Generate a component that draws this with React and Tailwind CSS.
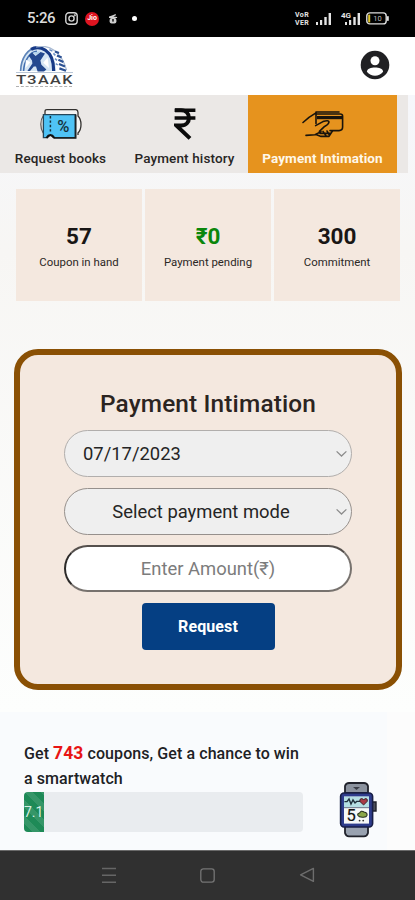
import React from 'react';

const stats = [
  { value: '57', label: 'Coupon in hand', color: 'text-[#191615]' },
  { value: '₹0', label: 'Payment pending', color: 'text-[#0b860b]' },
  { value: '300', label: 'Commitment', color: 'text-[#191615]' },
];

const Signal = () => (
  <svg width="17" height="14" viewBox="0 0 17 14" fill="#e4e4e4">
    <rect x="1" y="10" width="2" height="3" />
    <rect x="5" y="8" width="2.2" height="5" />
    <rect x="9.3" y="5" width="2.4" height="8" />
    <rect x="13.6" y="1" width="2.4" height="12" />
  </svg>
);

const StatusBar = () => (
  <div className="h-[37px] bg-black text-white flex items-center pl-[27px] pr-[26px]">
    <span className="text-[15px] leading-none font-medium text-[#dcdcdc] w-[38px] tracking-[-0.3px]">5:26</span>
    <svg width="13" height="13" viewBox="0 0 13 13" fill="none" stroke="#d6d6d6" strokeWidth="1.4">
      <rect x="0.8" y="0.8" width="11.4" height="11.4" rx="3.2" />
      <circle cx="6.5" cy="6.5" r="2.6" />
      <circle cx="9.8" cy="3.3" r="0.4" />
    </svg>
    <span className="ml-[7px] w-[14px] h-[14px] rounded-full bg-[#de1420] flex items-center justify-center text-[7px] leading-none font-bold">
      Jio
    </span>
    <svg className="ml-[9px]" width="10" height="12" viewBox="0 0 10 12" fill="#cfcfcf">
      <path d="M1 3.6 L4 2.6 L7.6 1 L8 2.2 L5.4 3.6 L9.2 4 L9 5 H1 Z" />
      <rect x="1.6" y="5" width="6.8" height="5.6" rx="2" />
      <rect x="4.2" y="6" width="1.6" height="2.6" fill="#222" />
    </svg>
    <span className="ml-[14px] w-[5px] h-[5px] rounded-full bg-white" />
    <div className="ml-auto flex items-center">
      <span className="flex flex-col text-[7px] leading-[8px] font-bold text-[#e4e4e4] w-[17px] tracking-[0.4px]">
        <span>VoR</span>
        <span>VER</span>
      </span>
      <span className="ml-[3px]"><Signal /></span>
      <span className="relative ml-[9px] w-[20px] h-[14px] flex justify-end">
        <Signal />
        <span className="absolute left-0 top-0 text-[8px] leading-[7px] font-bold text-[#e4e4e4]">4G</span>
      </span>
      <svg className="ml-[5px]" width="23" height="13" viewBox="0 0 23 13">
        <rect x="0.8" y="0.9" width="19.4" height="11" rx="3" fill="none" stroke="#dedede" strokeWidth="1.4" />
        <rect x="2.2" y="2.6" width="2" height="7.8" fill="#e0c62c" />
        <rect x="21" y="4" width="1.8" height="5" rx="0.8" fill="#dedede" />
        <text x="11.4" y="9.2" fontSize="7.5" fontFamily="Roboto, sans-serif" fill="#bdbdbd" textAnchor="middle">10</text>
      </svg>
    </div>
  </div>
);

const Logo = () => (
  <div className="w-[58px] flex flex-col items-center">
    <svg width="50" height="26" viewBox="0 0 50 26" fill="none">
      <path d="M2 25 C2 11 10 1 19 1 C30 1 37 11 37 25 Z" fill="#d6e6f4" />
      <path d="M1.6 25 C2 12 9 2 18 1.6" stroke="#5c83b8" strokeWidth="1.6" />
      <path d="M4.6 25 C5 15 11 5.4 18 5.2" stroke="#4470b0" strokeWidth="1.6" />
      <path d="M12 3.4 C20 -1 35 3 34.6 25" stroke="#173a87" strokeWidth="3.2" />
      <path d="M17 1 C30 -2 42 5 47.6 24" stroke="#a9bad2" strokeWidth="1.2" />
      <path d="M36 5.4 L40 7 M38 9.4 L42.6 11.6 M39.4 13.8 L44.4 16 M40 18 L46 20.4 M40.4 22.4 L47 24.8" stroke="#2d5294" strokeWidth="2.2" />
      <path d="M30.4 3.6 L33.4 5.2 M34.4 7.4 L36.4 9.4 M36 12.6 L38 14.4 M36.8 17.6 L38.8 19" stroke="#6d91c4" strokeWidth="1.5" />
      <path d="M9.6 9.4 L13 6.6 L16.6 10 L21.6 6 L26 7.4 L21.4 14.4 L22.4 18.8 L27.4 23.4 L25 25.6 H18.6 L17 20.6 L14.8 20.4 L11 25 H8.4 L13.4 17.6 L13 14.6 Z" fill="#24498f" />
      <path d="M6.8 13.8 L11.4 16.2 L6.4 22 Z M28.6 11.4 L24.2 16.8 L30 22 Z" fill="#fff" />
      <path d="M14 6.2 L17 9 L21.6 5.6 Z" fill="#b2d4ec" />
    </svg>
    <div className="h-[12px] w-[57px] border-t border-[#b9c6d6] flex justify-between items-center px-px text-[13.5px] leading-[12px] font-medium text-[#3f3f3f]">
      <span className="scale-x-[1.25]">T</span>
      <span className="scale-x-[1.25]">3</span>
      <span className="scale-x-[1.2]">A</span>
      <span className="scale-x-[1.2]">A</span>
      <span className="scale-x-[1.2]">K</span>
    </div>
    <span className="mt-[2px] w-[56px] border-t border-dashed border-[#b0b0b0]" />
  </div>
);

const Header = () => (
  <div className="h-[58px] bg-white flex justify-between pl-[15px] pr-[25px]">
    <div className="pt-[9px]"><Logo /></div>
    <svg className="mt-[13px]" width="30" height="30" viewBox="0 0 30 30">
      <circle cx="15" cy="15" r="14.3" fill="#202023" />
      <circle cx="15" cy="10.8" r="4.5" fill="#fff" />
      <path d="M6.9 21.8 C7 18.6 11 17.4 15 17.4 C19 17.4 23 18.6 23.1 21.8 C21 24.6 18 25.8 15 25.8 C12 25.8 9 24.6 6.9 21.8 Z" fill="#fff" />
    </svg>
  </div>
);

const CouponIcon = () => (
  <svg width="42" height="32" viewBox="0 0 42 32">
    <path d="M5 6 V3.4 Q5 1.6 7 1.6 H36 Q38 2 38 4.4 V8 C42 12 42 21 38 25 V27" fill="#f3f3f3" stroke="#33312f" strokeWidth="1.3" />
    <path d="M3.2 8 C0 12 0 20 3.2 25" fill="none" stroke="#5b5856" strokeWidth="1.2" />
    <path d="M3.4 6.6 H35.4 V29.6 H13.4 Q10.4 25 7.4 29.6 H3.4 Z" fill="#4fc3f6" stroke="#24465a" strokeWidth="1.3" />
    <path d="M35.6 6.6 V29.8 H14" fill="none" stroke="#1b2326" strokeWidth="1.8" />
    <path d="M6.4 30 Q10.4 24 14.4 30" fill="none" stroke="#111" strokeWidth="2.2" />
    <path d="M10.4 8 V24" stroke="#17303c" strokeWidth="1.5" strokeDasharray="2.4 2" />
    <text x="23.4" y="23.6" fontSize="16.5" fontWeight="500" fontFamily="Roboto, sans-serif" fill="#16303d" textAnchor="middle">%</text>
  </svg>
);

const RupeeIcon = () => (
  <svg width="22" height="32" viewBox="0 0 22 32" fill="none" stroke="#0b0b0b" strokeWidth="3.4">
    <path d="M0.6 2.2 H21.4 M0.6 10 H21.4" />
    <path d="M1 2.2 H7 C17.6 2.2 17.6 17.6 7 17.6 H2.6 L16 30.4" strokeWidth="4" />
  </svg>
);

const CardHandIcon = () => (
  <svg width="42" height="28" viewBox="0 0 42 28" fill="none" stroke="#19140c" strokeWidth="1.6" strokeLinecap="round" strokeLinejoin="round">
    <path d="M1 12.5 L7 7.4 L14 2.8 M14 2 H37" />
    <path d="M14 3 V13.4 M13.6 15.6 L21 11.6 Q26.6 9.6 27 12 Q26.6 14.6 22.6 16.4 L17.4 21.4" />
    <path d="M28 20.6 H37 Q40.6 20.6 40.6 17 V6 Q40.6 4 38 4 H14" />
    <path d="M15 7.6 H40" strokeWidth="3.2" strokeLinecap="butt" />
    <path d="M4 25.4 L13 24.8 L19 21.6 M14 24.6 L19 26.4 H27 L30.4 21 M21 21.4 L24 25.8 M25 21 L27.4 25 M18 23.4 H28" />
  </svg>
);

const Tabs = () => (
  <div className="h-[78px] w-[408px] bg-[#ebe8e6] flex text-[13.5px] text-[#272524]">
    <div className="w-[121px] flex flex-col items-center">
      <div className="h-[54px] pt-[13px]"><CouponIcon /></div>
      <span className="leading-[18px] whitespace-nowrap font-medium tracking-[0.12px]">Request books</span>
    </div>
    <div className="w-[127px] flex flex-col items-center">
      <div className="h-[54px] pt-[13px]"><RupeeIcon /></div>
      <span className="leading-[18px] whitespace-nowrap font-medium tracking-[0.12px]">Payment history</span>
    </div>
    <div className="w-[149px] bg-[#e6931e] flex flex-col items-center">
      <div className="h-[54px] pt-[15px]"><CardHandIcon /></div>
      <span className="leading-[18px] whitespace-nowrap text-[#fff8ea] font-bold tracking-[0.08px]">Payment Intimation</span>
    </div>
  </div>
);

const Select = ({ children, border, align }) => (
  <div className={`relative h-[47px] rounded-full border bg-[#efefef] flex items-center text-[18.4px] text-[#252525] ${border} ${align}`}>
    <span className="whitespace-nowrap">{children}</span>
    <svg className="absolute right-[4px] top-[19px]" width="11" height="8" viewBox="0 0 11 8" fill="none" stroke="#8b8b8b" strokeWidth="1.3">
      <path d="M0.6 1.4 L5.5 6 L10.4 1.4" />
    </svg>
  </div>
);

const PaymentCard = () => (
  <div className="mt-[48px] ml-[14px] w-[388px] h-[341px] rounded-[24px] border-[6px] border-[#8a5004] bg-[#f4e8df] px-[44px] pt-[34px]">
    <h2 className="text-[24.4px] leading-[30px] font-medium text-center text-[#2b2421] tracking-[0.15px] whitespace-nowrap">
      Payment Intimation
    </h2>
    <div className="mt-[11px] flex flex-col gap-[11px]">
      <Select border="border-[#b1aeac]" align="pl-[18px]">07/17/2023</Select>
      <Select border="border-[#96908c]" align="justify-center pr-[14px]">Select payment mode</Select>
      <div className="-mt-px h-[47px] rounded-full border-[2px] border-t-[#55504d] border-l-[#2c2a29] border-r-[#77726e] border-b-[#77726e] bg-white flex items-center justify-center pt-px text-[18.4px] text-[#7c7c7c]">
        Enter Amount(₹)
      </div>
    </div>
    <button className="mt-[11px] mx-auto block w-[133px] h-[47px] rounded-[4px] bg-[#053f83] text-white text-[16px] font-bold tracking-[0.1px]">
      Request
    </button>
  </div>
);

const Watch = () => (
  <svg width="38" height="56" viewBox="0 0 38 56">
    <path d="M6 11 V4 Q7 1 10 1 H25 Q28 1 29 4 V11 Z" fill="#8b929e" stroke="#20222b" strokeWidth="1.8" />
    <path d="M6 44 V51 Q7 54.4 10 54.4 H25 Q28 54.4 29 51 V44 Z" fill="#99a2b0" stroke="#20222b" strokeWidth="1.8" />
    <path d="M14 5 H21 L17.5 8 Z" fill="#3a3d47" />
    <path d="M33 20 H37 V29 H33 Z" fill="#4b4e5a" stroke="#20222b" strokeWidth="1.4" />
    <rect x="1.6" y="11" width="32" height="34" rx="3.4" fill="#2e3c8c" stroke="#181e45" strokeWidth="1.6" />
    <rect x="5" y="14.6" width="25" height="27" fill="#f6f8f8" />
    <rect x="5" y="14.6" width="25" height="10.4" fill="#b5dfe4" />
    <path d="M5 25.6 H30" stroke="#7d8798" strokeWidth="1.2" />
    <path d="M5.4 19.6 H8 L10 17 L12 22 L14 18 L16 21 L17.6 19.4 H21" fill="none" stroke="#20303c" strokeWidth="1.4" />
    <path d="M24.6 23 L20.8 19.4 Q20.4 16.6 22.6 16.6 Q24 16.6 24.6 18 Q25.4 16.6 27 16.6 Q29 17 28.2 19.4 Z" fill="#a83a46" stroke="#302028" strokeWidth="0.9" />
    <text x="12.2" y="39.4" fontSize="16.5" fontFamily="Roboto, sans-serif" fill="#111" stroke="#111" strokeWidth="0.2" textAnchor="middle">5</text>
    <path d="M19 33.6 Q18 31.4 20.6 31 Q22 28 25 30 Q28.6 30.6 28 33.4 Q27.4 35.4 24 35.2 Q20 35.4 19 33.6 Z" fill="#8aa648" stroke="#26301f" strokeWidth="1.1" />
    <circle cx="20.6" cy="38.6" r="0.9" fill="#333" />
    <circle cx="24.2" cy="38.6" r="0.9" fill="#333" />
  </svg>
);

const Reward = () => (
  <div className="h-[138px] w-[387px] bg-[#f9fbfd] flex pl-[24px] pt-[29px]">
    <div className="w-[279px]">
      <p className="text-[16px] leading-[25px] font-medium text-[#202124] whitespace-nowrap tracking-[0.08px]">
        Get <span className="text-[17.5px] leading-none text-[#e81414] font-bold">743</span> coupons, Get a chance to win
        <br />
        a smartwatch
      </p>
      <div className="mt-[1px] h-[40px] rounded-[4px] bg-[#e9ecef] overflow-hidden">
        <div className="w-[20px] h-full bg-[#1e8a57] bg-[linear-gradient(45deg,rgba(255,255,255,.1)_25%,transparent_25%,transparent_50%,rgba(255,255,255,.1)_50%,rgba(255,255,255,.1)_75%,transparent_75%)] bg-[length:16px_16px] text-[#d8efe2] text-[14px] flex items-center overflow-hidden">
          7.1
        </div>
      </div>
    </div>
    <div className="ml-[36px] mt-[41px]"><Watch /></div>
  </div>
);

const NavBar = () => (
  <div className="h-[50px] bg-[#303030] border-t border-[#6a6a6a] flex">
    <svg className="ml-[101px] mt-[16px]" width="16" height="17" viewBox="0 0 16 17" stroke="#666" strokeWidth="1.5">
      <path d="M1 1.5 H15 M1 8.3 H15 M1 15.2 H15" />
    </svg>
    <svg className="ml-[83px] mt-[17px]" width="15" height="15" viewBox="0 0 15 15" fill="none" stroke="#747474" strokeWidth="1.3">
      <rect x="0.8" y="0.8" width="13.4" height="13.4" rx="2.6" />
    </svg>
    <svg className="ml-[84px] mt-[16px]" width="16" height="16" viewBox="0 0 16 16" fill="none" stroke="#6d6d6d" strokeWidth="1.4" strokeLinejoin="round">
      <path d="M14.4 1.4 V14.4 L1.6 7.9 Z" />
    </svg>
  </div>
);

const App = () => {
  return (
    <div className="w-[415px] h-[900px] overflow-hidden bg-[#fcfcfc] font-['Roboto',sans-serif]">
      <StatusBar />
      <Header />
      <div className="h-[617px] bg-linear-to-b from-[#f6f7fb] via-[#f7f6f4] via-25% to-[#fdfefd]">
        <Tabs />
        <div className="mt-[16px] ml-[16px] w-[384px] flex gap-[3px]">
          {stats.map((s) => (
            <div key={s.label} className="w-[126px] h-[112px] bg-[#f4e8df] flex flex-col items-center pt-[33px]">
              <span className={`text-[22.5px] leading-[28px] font-bold ${s.color}`}>{s.value}</span>
              <span className="mt-[4px] text-[11.4px] leading-[16px] text-[#2b2725] whitespace-nowrap">{s.label}</span>
            </div>
          ))}
        </div>
        <PaymentCard />
      </div>
      <Reward />
      <NavBar />
    </div>
  );
};

export default App;
